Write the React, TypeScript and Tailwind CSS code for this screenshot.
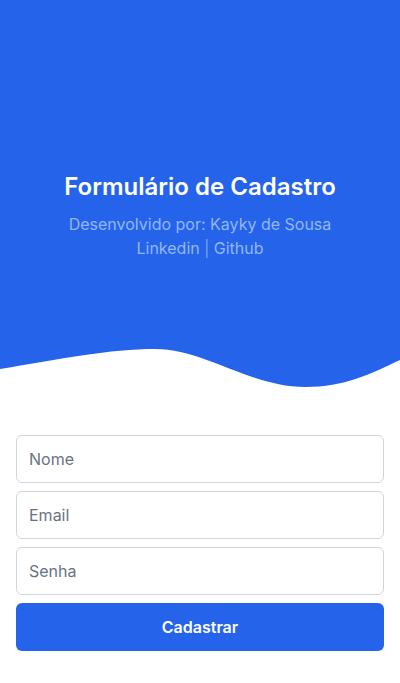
export default function App() {
  return (
    <div className="min-h-[683px] bg-white" style={{ fontFamily: "Inter, 'Noto Sans', sans-serif" }}>
      <div className="h-[345px] bg-[#2563eb] pt-[171px] flex flex-col items-center text-center">
        <h1 className="text-2xl leading-8 font-semibold text-white">Formulário de Cadastro</h1>
        <p className="mt-[9px] text-base leading-6 text-[#93b8fb]">Desenvolvido por: Kayky de Sousa</p>
        <p className="text-base leading-6 text-[#93b8fb]">
          Linkedin <span className="font-light">|</span> Github
        </p>
      </div>
      <svg className="block w-[400px] h-[45px]" viewBox="0 0 400 45" preserveAspectRatio="none">
        <path d="M0,24 C60,14 110,4 155,4 C205,4 250,42 305,42 C345,42 370,29 400,15 L400,0 L0,0 Z" fill="#2563eb" />
      </svg>
      <form className="mt-[45px] px-4 flex flex-col gap-2">
        <input placeholder="Nome" className="h-12 w-full rounded-md border border-gray-300 px-3 text-base text-gray-700 placeholder:text-gray-500 outline-none" />
        <input placeholder="Email" className="h-12 w-full rounded-md border border-gray-300 px-3 text-base text-gray-700 placeholder:text-gray-500 outline-none" />
        <input placeholder="Senha" type="password" className="h-12 w-full rounded-md border border-gray-300 px-3 text-base text-gray-700 placeholder:text-gray-500 outline-none" />
        <button type="button" className="h-12 w-full rounded-md bg-[#2563eb] text-white font-semibold text-base">Cadastrar</button>
      </form>
    </div>
  );
}
